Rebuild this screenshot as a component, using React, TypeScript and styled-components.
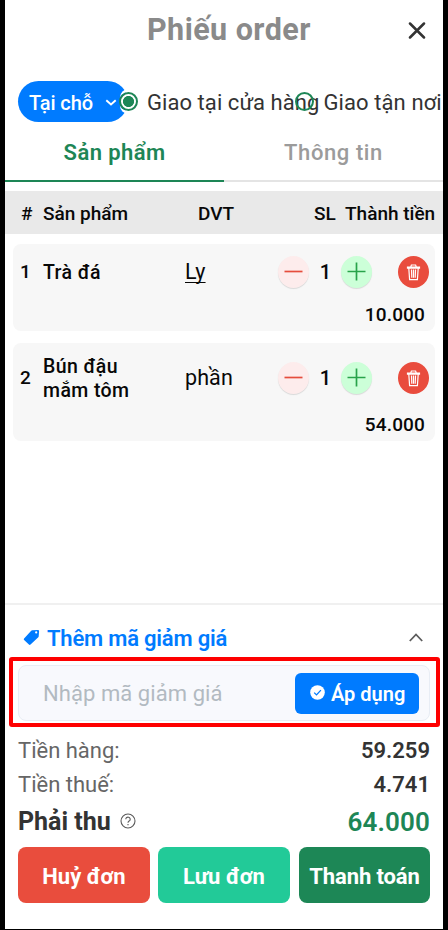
import React from "react";
import styled, { createGlobalStyle } from "styled-components";

const GlobalStyle = createGlobalStyle`
  *, *::before, *::after { box-sizing: border-box; }
  body { margin: 0; background: #000; font-family: Roboto, "Noto Sans", sans-serif; }
  button, input { font: inherit; border: 0; padding: 0; margin: 0; }
  svg { display: block; flex: none; }
`;

const Screen = styled.main`
  display: flex;
  flex-direction: column;
  width: 448px;
  height: 930px;
  border: solid #000;
  border-width: 0 5px 1px;
  background: #fff;
  overflow: hidden;
`;

const Text = styled.span<{ $size: number; $weight?: number; $color?: string; $spacing?: number; $underline?: boolean }>`
  font-size: ${(p) => p.$size}px;
  font-weight: ${(p) => p.$weight ?? 500};
  color: ${(p) => p.$color ?? "#080808"};
  letter-spacing: ${(p) => p.$spacing ?? 0}px;
  text-decoration: ${(p) => (p.$underline ? "underline" : "none")};
  text-decoration-thickness: 1px;
  text-underline-offset: 3px;
  text-decoration-skip-ink: none;
  line-height: 24px;
  white-space: nowrap;
`;

const Header = styled.header`
  display: grid;
  grid-template-columns: 1fr 20px;
  align-items: center;
  height: 60px;
  padding: 0 16px 0 142px;
`;

const Title = styled.h1`
  margin: 0;
  color: #8a8a8a;
  font-size: 30.5px;
  font-weight: 700;
  letter-spacing: 0.45px;
  line-height: 36px;
  white-space: nowrap;
`;

const IconButton = styled.button`
  display: grid;
  place-items: center;
  background: none;
`;

const Options = styled.div`
  display: flex;
  align-items: center;
  height: 41px;
  margin-top: 21px;
  padding-left: 13px;
`;

const ModePill = styled.button`
  display: flex;
  align-items: center;
  gap: 12px;
  width: 110px;
  height: 41px;
  padding: 2px 0 0 11px;
  border-radius: 21px;
  background: #007bff;
`;

const Radio = styled.label<{ $offset: number }>`
  display: flex;
  align-items: center;
  gap: 9px;
  padding-top: 2px;
  margin-left: ${(p) => p.$offset}px;
`;

const RadioMark = styled.span<{ $checked?: boolean }>`
  flex: none;
  width: 19px;
  height: 19px;
  margin-top: -3px;
  border: 2px solid #1d8656;
  border-radius: 50%;
  background: ${(p) => (p.$checked ? "radial-gradient(circle, #1d8656 5.2px, #fff 5.9px)" : "transparent")};
  box-shadow: ${(p) => (p.$checked ? "0 -4px 0 -1px #fff, 0 4px 0 -1px #fff" : "none")};
`;

const Tabs = styled.nav`
  display: grid;
  grid-template-columns: 1fr 1fr;
  height: 60px;
`;

const Tab = styled.button<{ $active?: boolean }>`
  display: flex;
  justify-content: center;
  align-items: flex-start;
  padding-top: 19px;
  background: none;
  border-bottom: 2px solid ${(p) => (p.$active ? "#1d8656" : "#e4e4e4")};
`;

const TableHead = styled.div`
  display: grid;
  grid-template-columns: 22px 155px 116px 31px 1fr;
  align-items: center;
  height: 43px;
  margin-top: 9px;
  padding: 2px 0 0 16px;
  background: #e9e9e9;
`;

const Items = styled.section`
  display: flex;
  flex-direction: column;
  gap: 12px;
  height: 369px;
  padding: 10px 8px 0;
`;

const ItemCard = styled.article<{ $height: number; $pad: number }>`
  display: flex;
  flex-direction: column;
  justify-content: space-between;
  height: ${(p) => p.$height}px;
  padding: ${(p) => p.$pad}px 6px 4px 7px;
  border-radius: 8px;
  background: #f7f7f7;
`;

const ItemRow = styled.div`
  display: grid;
  grid-template-columns: 23px 142px 93px 32px 31px 32px 25px 31px;
  align-items: center;
`;

const ItemName = styled.div`
  display: flex;
  flex-direction: column;
  margin: 1px 0 -1px;
`;

const Centered = styled.div`
  display: flex;
  justify-content: center;
`;

const ItemPrice = styled.div`
  display: flex;
  justify-content: flex-end;
  padding-right: 4px;
`;

const RoundButton = styled.button<{ $bg: string; $shadow?: boolean }>`
  display: grid;
  place-items: center;
  width: 31px;
  height: 32px;
  border-radius: 50%;
  background: ${(p) => p.$bg};
  box-shadow: ${(p) => (p.$shadow ? "0 1px 1px rgba(0, 0, 0, 0.12)" : "none")};
`;

const Footer = styled.footer`
  display: flex;
  flex-direction: column;
  border-top: 2px solid #f0f0f0;
`;

const DiscountHead = styled.div`
  display: flex;
  align-items: center;
  gap: 7px;
  height: 52px;
  padding: 15px 20px 0 18px;
  svg { margin-top: -2px; }
  svg:last-child { margin-left: auto; }
`;

const Highlight = styled.div`
  width: 431px;
  height: 70px;
  margin-left: 4px;
  padding: 5px;
  border: 4px solid #fe0000;
  border-radius: 3px;
`;

const CouponField = styled.div`
  display: flex;
  align-items: center;
  justify-content: space-between;
  width: 412px;
  height: 56px;
  margin-top: -1px;
  padding: 0 10px 0 24px;
  border: 1px solid #e8edf5;
  border-radius: 8px;
  background: #f8f9fd;
`;

const CouponInput = styled.input`
  width: 210px;
  height: 40px;
  background: none;
  font-size: 22px;
  letter-spacing: 0.07px;
  outline: none;
  &::placeholder { color: #b2bac1; opacity: 1; }
`;

const ApplyButton = styled.button`
  display: flex;
  align-items: center;
  gap: 6px;
  width: 124px;
  height: 41px;
  padding: 2px 0 0 15px;
  border-radius: 6px;
  background: #007bff;
  svg { margin-top: -3px; }
`;

const Totals = styled.div`
  display: flex;
  flex-direction: column;
  padding: 7px 13px 0 13px;
`;

const TotalRow = styled.div<{ $height?: number }>`
  display: flex;
  align-items: center;
  justify-content: space-between;
  height: ${(p) => p.$height ?? 34}px;
`;

const TotalLabel = styled.div`
  display: flex;
  align-items: center;
  gap: 9px;
  svg { margin-top: -2px; }
`;

const Actions = styled.div`
  display: grid;
  grid-template-columns: 132px 132px 132px;
  column-gap: 8px;
  margin-top: 6px;
  padding: 0 13px;
`;

const ActionButton = styled.button<{ $bg: string }>`
  height: 56px;
  padding-top: 3px;
  border-radius: 8px;
  background: ${(p) => p.$bg};
  &:last-child { margin-left: 1px; }
`;

const CloseIcon = () => (
  <svg width="18" height="18" viewBox="0 0 18 18" fill="none" stroke="#333" strokeWidth="2.5" strokeLinecap="round">
    <path d="M2 2.5l14 14M16 2.5L2 16.5" />
  </svg>
);

const ChevronDown = () => (
  <svg width="12" height="8" viewBox="0 0 12 8" fill="none" stroke="#fff" strokeWidth="1.9">
    <path d="M1.3 1.2L6 5.5l4.7-4.3" />
  </svg>
);

const ChevronUp = () => (
  <svg width="14" height="9" viewBox="0 0 14 9" fill="none" stroke="#5c5c5c" strokeWidth="1.8">
    <path d="M.8 8L7 1.5 13.2 8" />
  </svg>
);

const MinusIcon = () => (
  <svg width="20" height="20" viewBox="0 0 20 20" fill="none" stroke="#e54d3d" strokeWidth="1.7">
    <path d="M.5 9.5h18" />
  </svg>
);

const PlusIcon = () => (
  <svg width="20" height="20" viewBox="0 0 20 20" fill="none" stroke="#28a34a" strokeWidth="1.7">
    <path d="M.5 9.5h18M9.5 .5v18" />
  </svg>
);

const TrashIcon = () => (
  <svg width="15" height="17" viewBox="0 0 15 17" fill="none" stroke="#fff" strokeWidth="1.2">
    <path d="M1.5 4.1V3h12v1.1zM4.8 2.8L5.4 1h4.2l.6 1.8M2.8 4.2l.8 11.4h7.8l.8-11.4M5.5 5.5l.3 8.3M7.5 5.5v8.3M9.5 5.5l-.3 8.3" />
  </svg>
);

const TagIcon = () => (
  <svg width="17" height="17" viewBox="0 0 17 17">
    <path
      d="M9.2 1.2L15 .9q1.1 0 1.1 1.1l-.4 5.3q0 .5-.4.9l-7.8 7.4q-.8.8-1.6 0L1.1 11q-.8-.8 0-1.6L8.2 1.7q.4-.5 1-.5zM13.2 2.3a1.1 1.1 0 100 2.2 1.1 1.1 0 000-2.2z"
      fill="#007bff"
      fillRule="evenodd"
    />
  </svg>
);

const CheckIcon = () => (
  <svg width="15" height="15" viewBox="0 0 15 15">
    <circle cx="7.5" cy="7.5" r="7.3" fill="#fff" />
    <path d="M4.2 7.6l2.3 2.3 4.4-4.8" fill="none" stroke="#007bff" strokeWidth="1.3" />
  </svg>
);

const HelpIcon = () => (
  <svg width="16" height="16" viewBox="0 0 16 16" fill="none" stroke="#5a5a5a" strokeWidth="1.1">
    <circle cx="8" cy="8" r="7" />
    <path d="M5.8 6.3a2.2 2.2 0 114.1 1.1C9.3 8.2 8 8.3 8 9.8M8 10.9v1.4" />
  </svg>
);

type Item = { no: number; name: string[]; unit: string; linked?: boolean; price: string; height: number; pad: number };

const items: Item[] = [
  { no: 1, name: ["Trà đá"], unit: "Ly", linked: true, price: "10.000", height: 87, pad: 12 },
  { no: 2, name: ["Bún đậu", "mắm tôm"], unit: "phần", price: "54.000", height: 98, pad: 11 },
];

export default function App() {
  return (
    <>
      <GlobalStyle />
      <Screen>
        <Header>
          <Title>Phiếu order</Title>
          <IconButton aria-label="Đóng"><CloseIcon /></IconButton>
        </Header>
        <Options>
          <ModePill>
            <Text $size={20} $color="#fff" $spacing={-0.1}>Tại chỗ</Text>
            <ChevronDown />
          </ModePill>
          <Radio $offset={-9}>
            <RadioMark $checked />
            <Text $size={22} $weight={400} $color="#333" $spacing={0.06}>Giao tại cửa hàng</Text>
          </Radio>
          <Radio $offset={-24}>
            <RadioMark />
            <Text $size={22} $weight={400} $color="#333" $spacing={0.1}>Giao tận nơi</Text>
          </Radio>
        </Options>
        <Tabs>
          <Tab $active><Text $size={22} $weight={600} $color="#1d8656" $spacing={0.4}>Sản phẩm</Text></Tab>
          <Tab><Text $size={22} $color="#9b9b9b" $spacing={0.6}>Thông tin</Text></Tab>
        </Tabs>
        <TableHead>
          <Text $size={19}>#</Text>
          <Text $size={19}>Sản phẩm</Text>
          <Text $size={19}>DVT</Text>
          <Text $size={19}>SL</Text>
          <Text $size={19}>Thành tiền</Text>
        </TableHead>
        <Items>
          {items.map((item) => (
            <ItemCard key={item.no} $height={item.height} $pad={item.pad}>
              <ItemRow>
                <Text $size={19}>{item.no}</Text>
                <ItemName>
                  {item.name.map((line) => <Text key={line} $size={19.5} $spacing={0.4}>{line}</Text>)}
                </ItemName>
                <Text $size={21.5} $weight={400} $spacing={0.1} $underline={item.linked}>{item.unit}</Text>
                <RoundButton $bg="#fdecec" $shadow aria-label="Giảm"><MinusIcon /></RoundButton>
                <Centered><Text $size={20}>1</Text></Centered>
                <RoundButton $bg="#ccffd8" $shadow aria-label="Tăng"><PlusIcon /></RoundButton>
                <span />
                <RoundButton $bg="#e94c3d" aria-label="Xoá"><TrashIcon /></RoundButton>
              </ItemRow>
              <ItemPrice><Text $size={19} $spacing={0.15}>{item.price}</Text></ItemPrice>
            </ItemCard>
          ))}
        </Items>
        <Footer>
          <DiscountHead>
            <TagIcon />
            <Text $size={22} $weight={600} $color="#007bff" $spacing={-0.2}>Thêm mã giảm giá</Text>
            <ChevronUp />
          </DiscountHead>
          <Highlight>
            <CouponField>
              <CouponInput placeholder="Nhập mã giảm giá" />
              <ApplyButton>
                <CheckIcon />
                <Text $size={20} $weight={600} $color="#fff">Áp dụng</Text>
              </ApplyButton>
            </CouponField>
          </Highlight>
          <Totals>
            <TotalRow>
              <Text $size={22} $weight={400} $color="#666">Tiền hàng:</Text>
              <Text $size={22} $weight={600} $color="#333">59.259</Text>
            </TotalRow>
            <TotalRow>
              <Text $size={22} $weight={400} $color="#666">Tiền thuế:</Text>
              <Text $size={22} $weight={600} $color="#333">4.741</Text>
            </TotalRow>
            <TotalRow $height={39}>
              <TotalLabel>
                <Text $size={25} $weight={700} $color="#333">Phải thu</Text>
                <HelpIcon />
              </TotalLabel>
              <Text $size={26} $weight={600} $color="#1d8656" $spacing={0.15}>64.000</Text>
            </TotalRow>
          </Totals>
          <Actions>
            <ActionButton $bg="#e94d3d"><Text $size={22} $weight={700} $color="#fff">Huỷ đơn</Text></ActionButton>
            <ActionButton $bg="#22ca98"><Text $size={22} $weight={700} $color="#fff">Lưu đơn</Text></ActionButton>
            <ActionButton $bg="#1d8756"><Text $size={22} $weight={700} $color="#fff" $spacing={-0.1}>Thanh toán</Text></ActionButton>
          </Actions>
        </Footer>
      </Screen>
    </>
  );
}
